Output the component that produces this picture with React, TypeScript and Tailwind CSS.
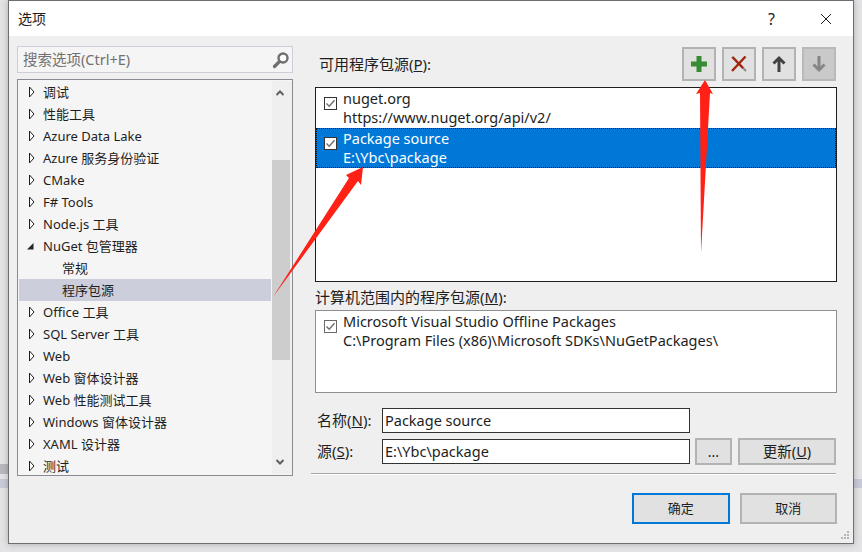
import React from 'react'

const font = "font-['Noto_Sans','Noto_Sans_CJK_SC',sans-serif]"

const treeItems = [
    { label: '调试' },
    { label: '性能工具' },
    { label: 'Azure Data Lake' },
    { label: 'Azure 服务身份验证' },
    { label: 'CMake' },
    { label: 'F# Tools' },
    { label: 'Node.js 工具' },
    { label: 'NuGet 包管理器', open: true },
    { label: '常规', child: true },
    { label: '程序包源', child: true, selected: true },
    { label: 'Office 工具' },
    { label: 'SQL Server 工具' },
    { label: 'Web' },
    { label: 'Web 窗体设计器' },
    { label: 'Web 性能测试工具' },
    { label: 'Windows 窗体设计器' },
    { label: 'XAML 设计器' },
    { label: '测试' },
]

const Caret = ({ open }: { open?: boolean }) =>
    open ? (
        <svg width="10" height="10" viewBox="0 0 10 10" className="ml-[8px] shrink-0">
            <path d="M6.5 2 V8.5 H0 Z" fill="#262626" />
        </svg>
    ) : (
        <svg width="10" height="12" viewBox="0 0 10 12" className="ml-[8px] shrink-0">
            <path d="M2.5 1 L7 6 L2.5 11 Z" fill="#fff" stroke="#1e1e1e" strokeWidth="1" />
        </svg>
    )

const TreeRow = ({ label, open, child, selected }: { label: string; open?: boolean; child?: boolean; selected?: boolean }) => (
    <div className={`flex items-center h-[22px] shrink-0 ${selected ? 'bg-[#cccedb]' : ''}`}>
        {child ? <div className="w-[43px] shrink-0" /> : <Caret open={open} />}
        <span className={`${child ? '' : 'ml-[6px]'} mt-px text-[13px] text-[#1e1e1e] whitespace-nowrap`}>{label}</span>
    </div>
)

const Check = ({ dim }: { dim?: boolean }) => (
    <div className={`w-[13px] h-[13px] mt-[9px] shrink-0 flex items-center justify-center bg-white border ${dim ? 'border-[#6a6a6a]' : 'border-[#333333]'}`}>
        <svg width="11" height="11" viewBox="0 0 11 11">
            <path d="M1.5 5.5 L4.2 8.2 L9.5 2.2" fill="none" stroke="#6e6e6e" strokeWidth="1.4" />
        </svg>
    </div>
)

const SourceRow = ({ name, url, selected, dim }: { name: string; url: string; selected?: boolean; dim?: boolean }) => (
    <div className={`flex h-[40px] pl-[8px] gap-[6px] ${selected ? 'bg-[#0078d7] text-white outline-1 outline-dotted outline-offset-[-1px] outline-[#1b1b1b]' : 'text-[#1e1e1e]'}`}>
        <Check dim={dim} />
        <div className="text-[14.5px] leading-[19px] mt-[1px] whitespace-nowrap">
            <div>{name}</div>
            <div>{url}</div>
        </div>
    </div>
)

const ToolButton = ({ disabled, children }: { disabled?: boolean; children: React.ReactNode }) => (
    <div className={`w-[34px] h-[34px] flex items-center justify-center border-2 ${disabled ? 'bg-[#c9c9c9] border-[#b9b9b9]' : 'bg-[#e1e1e1] border-[#b3b3b3]'}`}>
        {children}
    </div>
)

const Field = ({ label, hot, value, rest }: { label: string; hot: string; value: string; rest?: React.ReactNode }) => (
    <div className="flex items-center h-[27px]">
        <span className="w-[67px] pl-[2px] text-[15px] text-[#1e1e1e] whitespace-nowrap">
            {label}(<u>{hot}</u>):
        </span>
        <div className="w-[308px] h-[25px] bg-white border border-[#333333] pl-[2px] flex items-center text-[14.5px] text-[#1e1e1e]">{value}</div>
        {rest}
    </div>
)

const App = () => {
    return (
        <div className={`relative w-[862px] h-[552px] overflow-hidden bg-[#e3e3e5] ${font}`}>
            {/* stuff of the window behind the dialog */}
            <div className="absolute left-0 top-[464px] w-2 h-[10px] bg-[#b7b7bd]" />
            <div className="absolute left-0 top-[479px] w-2 h-[9px] bg-[#c9cad8]" />
            <div className="absolute right-0 top-[479px] w-2 h-[9px] bg-[#c9cad8]" />

            <div className="absolute left-2 top-0 w-[846px] h-[544px] flex flex-col border border-[#6e6e6e] bg-[#efefef] shadow-[0_0_6px_rgba(0,0,0,0.25)]">
                <div className="h-[35px] shrink-0 bg-white flex items-center pl-[9px] pr-[21px]">
                    <span className="text-[14px] text-[#1e1e1e]">选项</span>
                    <span className="ml-auto text-[16px] text-[#1e1e1e]">?</span>
                    <svg width="12" height="12" viewBox="0 0 12 12" className="ml-[45px]">
                        <path d="M1 1 L11 11 M11 1 L1 11" stroke="#1e1e1e" strokeWidth="1" />
                    </svg>
                </div>

                <div className="flex flex-1 min-h-0 relative">
                    <div className="w-[276px] ml-2 shrink-0 mt-[10px]">
                        <div className="h-[27px] border border-[#cccedb] bg-[#f5f5f5] flex items-center pl-[5px] pr-[2px]">
                            <span className="text-[14.5px] text-[#717171]">搜索选项(Ctrl+E)</span>
                            <svg width="18" height="18" viewBox="0 0 18 18" className="ml-auto">
                                <circle cx="11" cy="7" r="4.5" fill="#fff" stroke="#6f6f6f" strokeWidth="2.4" />
                                <path d="M7.5 10.5 L2.5 15.5" stroke="#6f6f6f" strokeWidth="3.2" strokeLinecap="round" />
                            </svg>
                        </div>
                        <div className="h-[397px] mt-[6px] border border-[#8a8a92] bg-[#f5f5f5] flex pl-px pt-px overflow-hidden">
                            <div className="w-[252px] flex flex-col shrink-0 overflow-hidden">
                                {treeItems.map((item) => (
                                    <TreeRow key={item.label} {...item} />
                                ))}
                            </div>
                            <div className="w-[20px] ml-px h-[393px] bg-[#efefef] flex flex-col items-start">
                                <svg width="10" height="8" viewBox="0 0 10 8" className="mt-[8px] ml-[3px]">
                                    <path d="M1.5 6 L5 2.5 L8.5 6" fill="none" stroke="#606060" strokeWidth="2" />
                                </svg>
                                <div className="w-[18px] h-[200px] mt-[63px] bg-[#cdcdcd]" />
                                <svg width="10" height="8" viewBox="0 0 10 8" className="mt-auto mb-[8px] ml-[3px]">
                                    <path d="M1.5 2 L5 5.5 L8.5 2" fill="none" stroke="#606060" strokeWidth="2" />
                                </svg>
                            </div>
                        </div>
                    </div>

                    <div className="w-[526px] ml-[18px] shrink-0 flex flex-col">
                        <div className="flex items-center h-[34px] mt-[11px] pl-[8px] pr-[1px]">
                            <span className="text-[15px] text-[#1e1e1e]">可用程序包源(<u>P</u>):</span>
                            <div className="ml-auto flex gap-[6px]">
                                <ToolButton>
                                    <svg width="18" height="18" viewBox="0 0 18 18">
                                        <path d="M9 1 V17 M1 9 H17" stroke="#388a34" strokeWidth="5" />
                                    </svg>
                                </ToolButton>
                                <ToolButton>
                                    <svg width="18" height="18" viewBox="0 0 18 18">
                                        <path d="M2 2 L16 16" stroke="#8a8a8a" strokeWidth="2" />
                                        <path d="M15.5 1.5 L2 16 M2.5 2 L13 13" stroke="#a1260d" strokeWidth="2.4" />
                                    </svg>
                                </ToolButton>
                                <ToolButton>
                                    <svg width="14" height="18" viewBox="0 0 14 18">
                                        <path d="M7 17 V3 M1.5 8.5 L7 3 L12.5 8.5" fill="none" stroke="#424242" strokeWidth="3" />
                                    </svg>
                                </ToolButton>
                                <ToolButton disabled>
                                    <svg width="14" height="18" viewBox="0 0 14 18">
                                        <path d="M7 1 V15 M1.5 9.5 L7 15 L12.5 9.5" fill="none" stroke="#858585" strokeWidth="3" />
                                    </svg>
                                </ToolButton>
                            </div>
                        </div>

                        <div className="ml-[4px] w-[522px] h-[195px] mt-[6px] bg-white border border-[#1e1e1e]">
                            <SourceRow name="nuget.org" url="https://www.nuget.org/api/v2/" />
                            <SourceRow selected name="Package source" url="E:\Ybc\package" />
                        </div>

                        <div className="ml-[4px] mt-[5px] h-[21px] flex items-center text-[15px] text-[#1e1e1e]">
                            计算机范围内的程序包源(<u>M</u>):
                        </div>
                        <div className="ml-[4px] w-[522px] h-[83px] mt-[2px] bg-white border border-[#8f8f8f]">
                            <SourceRow dim name="Microsoft Visual Studio Offline Packages" url="C:\Program Files (x86)\Microsoft SDKs\NuGetPackages\" />
                        </div>

                        <div className="ml-[4px] mt-[14px] flex flex-col gap-[4px]">
                            <Field label="名称" hot="N" value="Package source" />
                            <Field
                                label="源"
                                hot="S"
                                value="E:\Ybc\package"
                                rest={
                                    <div className="flex ml-[5px] gap-[6px]">
                                        <div className="w-[37px] h-[27px] bg-[#e1e1e1] border-2 border-[#b3b3b3] flex items-center justify-center text-[14px] text-[#1e1e1e] leading-none">...</div>
                                        <div className="w-[98px] h-[27px] bg-[#e1e1e1] border-2 border-[#b3b3b3] flex items-center justify-center text-[14.5px] text-[#1e1e1e]">
                                            更新(<u>U</u>)
                                        </div>
                                    </div>
                                }
                            />
                        </div>

                        <div className="mt-[8px] w-[525px] h-[2px] border-t border-[#a6a6a6] border-b border-b-white" />

                        <div className="flex mt-[18px] ml-[321px] gap-[10px]">
                            <div className="w-[98px] h-[31px] bg-[#e1e1e1] border-2 border-[#0078d7] flex items-center justify-center text-[13px] text-[#1e1e1e]">确定</div>
                            <div className="w-[98px] h-[31px] bg-[#e1e1e1] border-2 border-[#b3b3b3] flex items-center justify-center text-[13px] text-[#1e1e1e]">取消</div>
                        </div>
                    </div>

                    {/* resize grip */}
                    <svg width="10" height="10" viewBox="0 0 10 10" className="absolute right-[3px] bottom-[2px]">
                        <path d="M7 0 h2 v2 h-2 Z M4 3 h2 v2 h-2 Z M7 3 h2 v2 h-2 Z M1 6 h2 v2 h-2 Z M4 6 h2 v2 h-2 Z M7 6 h2 v2 h-2 Z" fill="#b5b5b5" />
                    </svg>
                </div>
            </div>

            {/* red annotation arrows */}
            <svg width="862" height="552" viewBox="0 0 862 552" className="absolute left-0 top-0 pointer-events-none">
                <path d="M273 297 L349 178 L346 175 L363 167 L361 185 L358 181 Z" fill="#ff2016" />
                <path d="M701 253 L700 93 L696 94 L705 80 L713 94 L710 93 Z" fill="#ff2016" />
            </svg>
        </div>
    )
}

export default App
